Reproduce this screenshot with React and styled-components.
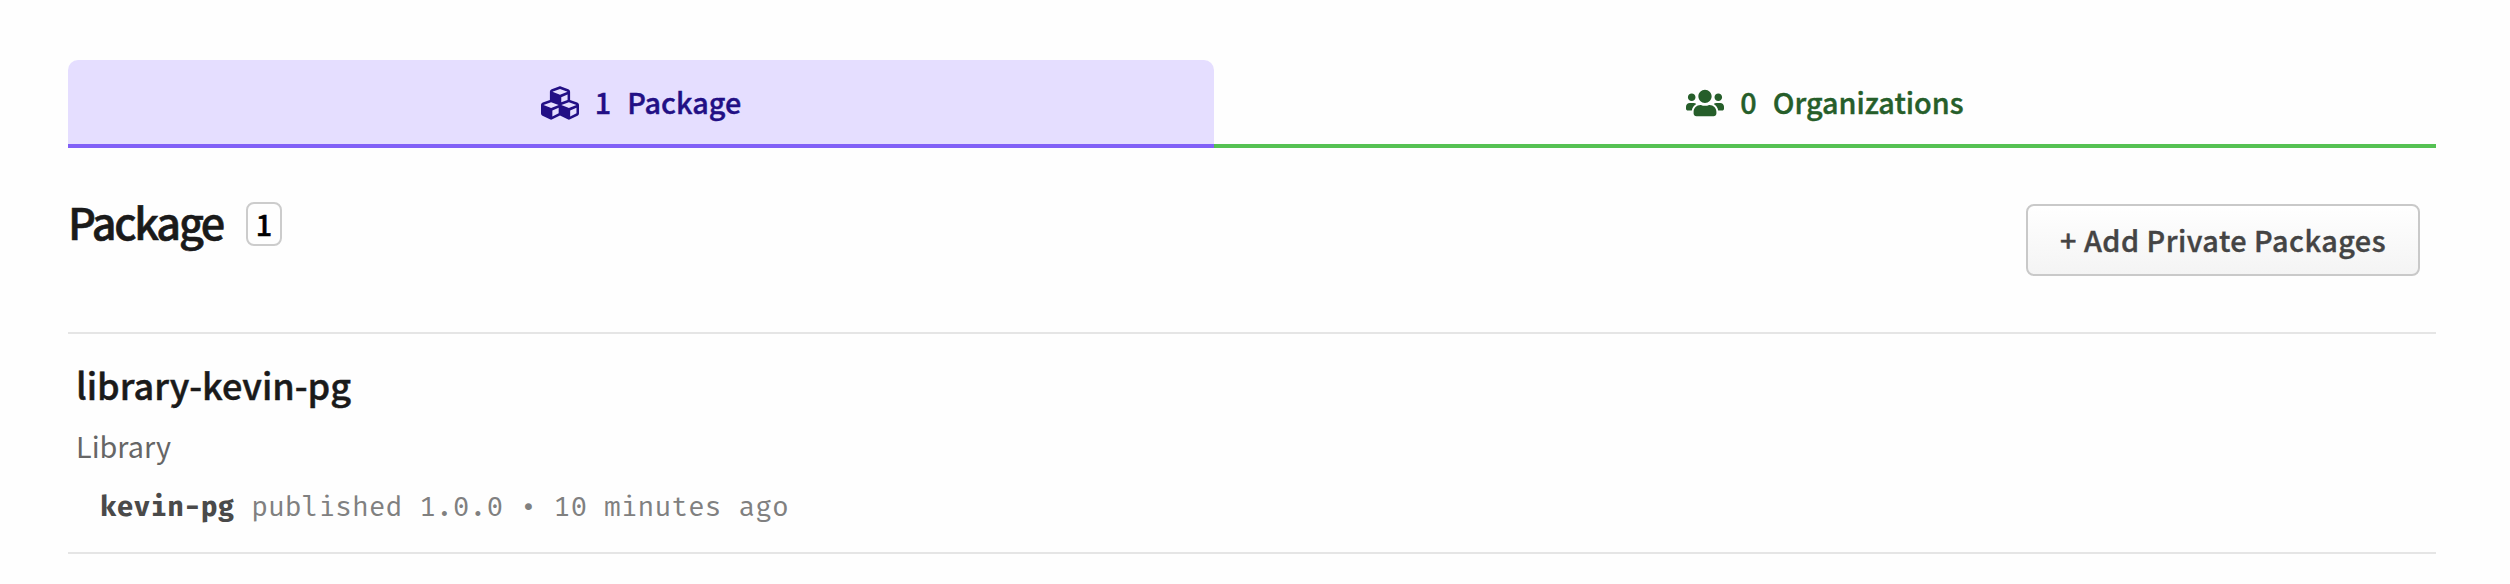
import React from 'react';
import styled, { createGlobalStyle } from 'styled-components';
import { FaCubes, FaUsers } from 'react-icons/fa';

const GlobalStyle = createGlobalStyle`
  *, *::before, *::after { box-sizing: border-box; }
  body {
    margin: 0;
    background: #fefefe;
    color: #1a1a1a;
    font-family: "Noto Sans CJK SC", "Noto Sans", sans-serif;
    font-size: 28.8px;
  }
`;

const Page = styled.main`
  min-height: 584px;
  padding: 60px 74px 0 68px;
`;

const Tabs = styled.nav`
  display: grid;
  grid-template-columns: 1146px 1fr;
`;

const Tab = styled.a`
  display: flex;
  align-items: center;
  justify-content: center;
  gap: 16px;
  height: 88px;
  padding-bottom: 4px;
  border-radius: 10px 10px 0 0;
  background: ${(p) => p.$fill || 'transparent'};
  box-shadow: inset 0 -4px 0 ${(p) => p.$line};
  color: ${(p) => p.$ink};
  font-weight: 500;
  line-height: 40px;
  -webkit-text-stroke: 0.4px currentColor;

  svg {
    width: 38px;
    height: 38px;
    margin-top: 2px;
    stroke: none;
  }
`;

const Header = styled.header`
  display: flex;
  align-items: flex-start;
  justify-content: space-between;
  height: 184px;
  padding: 54px 16px 0 0;
`;

const TitleGroup = styled.div`
  display: flex;
  align-items: flex-start;
  gap: 23px;
`;

const Title = styled.h2`
  margin: 0;
  font-size: 43.2px;
  font-weight: 500;
  line-height: 38px;
  letter-spacing: -2.3px;
  -webkit-text-stroke: 0.6px currentColor;
`;

const Count = styled.span`
  width: 36px;
  height: 44px;
  border: 2px solid #ccc;
  border-radius: 8px;
  color: #000;
  font-weight: 500;
  line-height: 40px;
  text-align: center;
  -webkit-text-stroke: 0.5px currentColor;
`;

const AddButton = styled.button`
  width: 394px;
  height: 72px;
  margin: 2px 0 0;
  padding: 0;
  border: 2px solid #c9c9c9;
  border-radius: 8px;
  background: linear-gradient(#fff, #f4f4f4);
  color: #444;
  font: inherit;
  font-weight: 500;
  line-height: 68px;
  letter-spacing: 0.5px;
  white-space: nowrap;
  -webkit-text-stroke: 0.4px currentColor;
`;

const PackageList = styled.ul`
  margin: 0;
  padding: 0;
  list-style: none;
  border-top: 2px solid #e5e5e5;
`;

const PackageItem = styled.li`
  padding: 26px 8px 25px;
  border-bottom: 2px solid #e5e5e5;
`;

const PackageName = styled.h3`
  margin: 0;
  font-size: 36px;
  font-weight: 500;
  line-height: 48px;
  -webkit-text-stroke: 0.5px currentColor;
`;

const Description = styled.p`
  margin: 20px 0 0;
  color: #666;
  line-height: 36px;
`;

const Meta = styled.p`
  margin: 23px 0 0 24px;
  color: #808080;
  font-family: "Fira Mono", "Liberation Mono", monospace;
  font-size: 28px;
  line-height: 40px;
`;

const Author = styled.strong`
  color: #4a4a4a;
  font-weight: 700;
`;

export default function App() {
  return (
    <>
      <GlobalStyle />
      <Page>
        <Tabs>
          <Tab $ink="#220f85" $fill="#e5deff" $line="#8160f7">
            <FaCubes />
            <span>1</span>
            <span>Package</span>
          </Tab>
          <Tab $ink="#265e2a" $line="#55c153">
            <FaUsers />
            <span>0</span>
            <span>Organizations</span>
          </Tab>
        </Tabs>
        <Header>
          <TitleGroup>
            <Title>Package</Title>
            <Count>1</Count>
          </TitleGroup>
          <AddButton>+ Add Private Packages</AddButton>
        </Header>
        <PackageList>
          <PackageItem>
            <PackageName>library-kevin-pg</PackageName>
            <Description>Library</Description>
            <Meta>
              <Author>kevin-pg</Author> published 1.0.0 • 10 minutes ago
            </Meta>
          </PackageItem>
        </PackageList>
      </Page>
    </>
  );
}
